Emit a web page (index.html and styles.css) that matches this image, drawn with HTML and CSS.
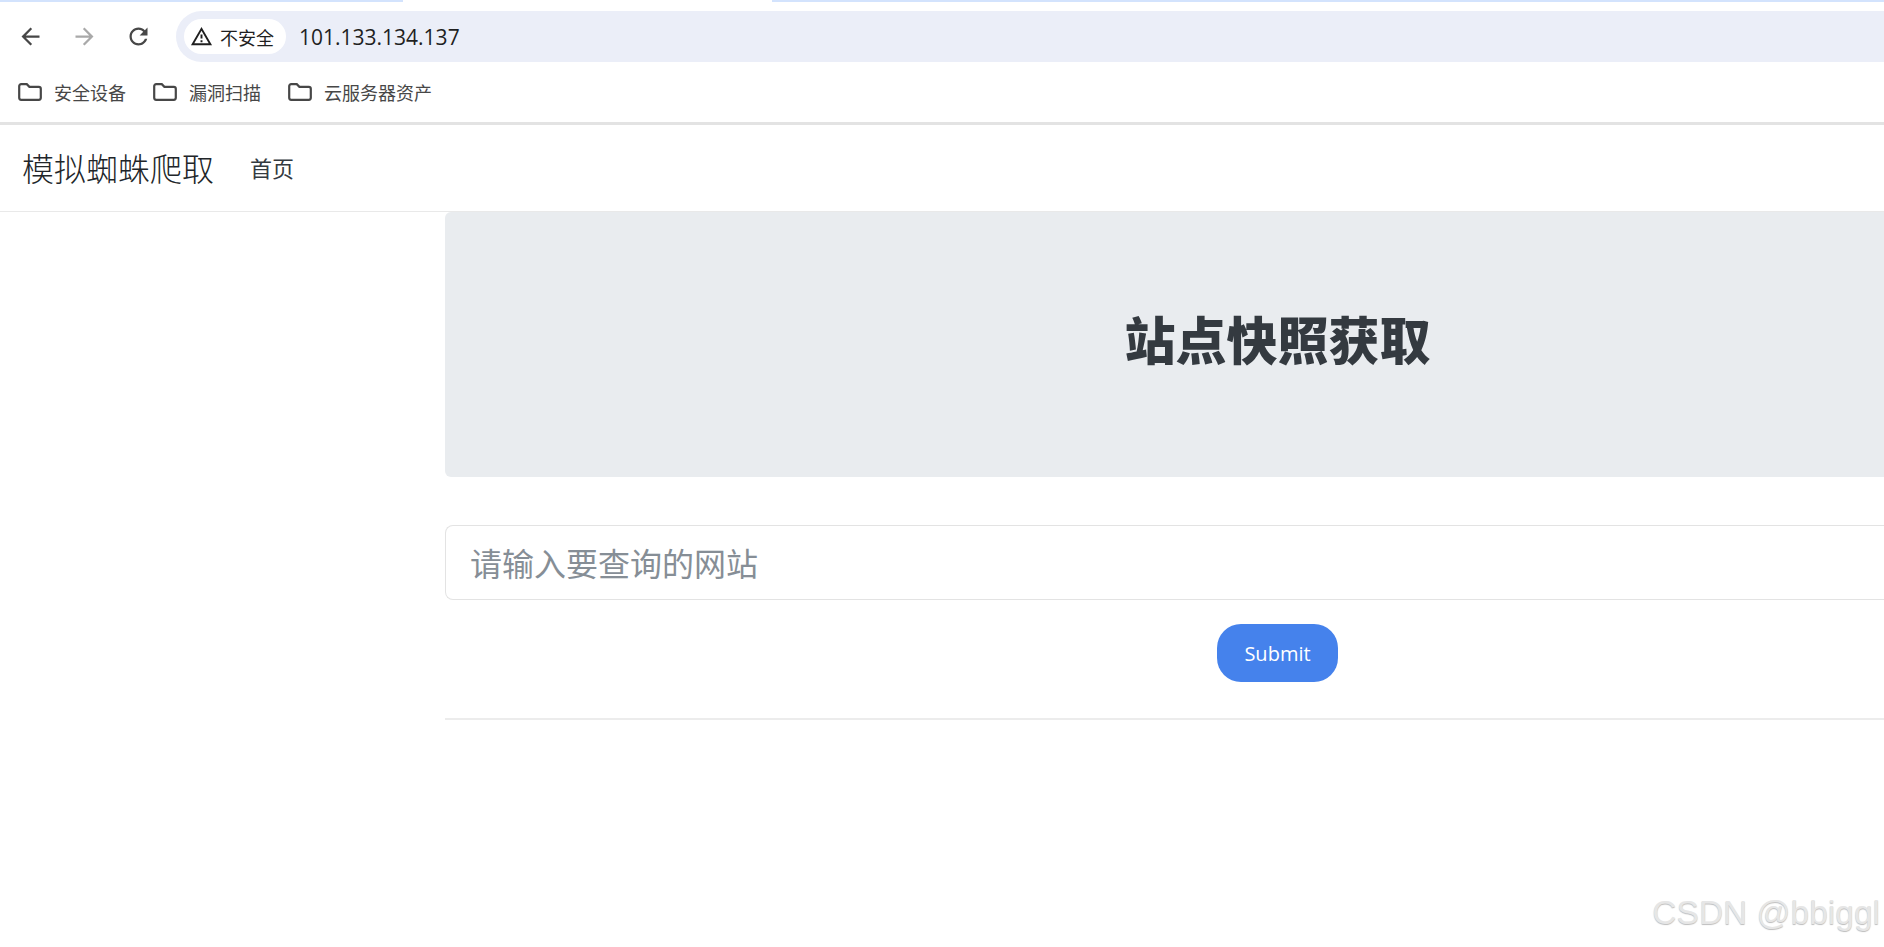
FILE: index.html
```html
<!DOCTYPE html>
<html>
<head>
<meta name="viewport" content="width=device-width, initial-scale=1">
<link rel="stylesheet" href="styles.css">
</head>
<body>

<div class="tabstrip">
  <span class="tab-edge tab-left"></span>
  <span class="tab-edge tab-right"></span>
</div>

<div class="toolbar">
  <svg class="nav-icon" viewBox="0 0 24 24"><path d="M20 11H7.83l5.59-5.59L12 4l-8 8 8 8 1.41-1.41L7.83 13H20v-2z"/></svg>
  <svg class="nav-icon nav-off" viewBox="0 0 24 24"><path d="M12 4l-1.41 1.41L16.17 11H4v2h12.17l-5.58 5.59L12 20l8-8z"/></svg>
  <svg class="nav-icon" viewBox="0 0 24 24"><path d="M17.65 6.35C16.2 4.9 14.21 4 12 4c-4.42 0-7.99 3.58-7.99 8s3.57 8 7.99 8c3.73 0 6.84-2.55 7.73-6h-2.08c-.82 2.33-3.04 4-5.65 4-3.31 0-6-2.69-6-6s2.69-6 6-6c1.66 0 3.14.69 4.22 1.78L13 11h7V4l-2.35 2.35z"/></svg>
  <div class="omnibox">
    <div class="chip">
      <svg class="warn" viewBox="0 0 24 24"><path d="M12 5.99 19.53 19H4.47L12 5.99M12 2 1 21h22L12 2zm1 14h-2v2h2v-2zm0-6h-2v4h2v-4z"/></svg>
      <span>不安全</span>
    </div>
    <span class="url">101.133.134.137</span>
  </div>
</div>

<div class="bookmarks">
  <div class="bookmark">
    <svg class="folder" viewBox="0 0 24 18"><path d="M1.2 3.2a2 2 0 0 1 2-2h5.6l2.6 2.6h9.4a2 2 0 0 1 2 2v9a2 2 0 0 1-2 2H3.2a2 2 0 0 1-2-2z"/></svg>
    <span>安全设备</span>
  </div>
  <div class="bookmark">
    <svg class="folder" viewBox="0 0 24 18"><path d="M1.2 3.2a2 2 0 0 1 2-2h5.6l2.6 2.6h9.4a2 2 0 0 1 2 2v9a2 2 0 0 1-2 2H3.2a2 2 0 0 1-2-2z"/></svg>
    <span>漏洞扫描</span>
  </div>
  <div class="bookmark">
    <svg class="folder" viewBox="0 0 24 18"><path d="M1.2 3.2a2 2 0 0 1 2-2h5.6l2.6 2.6h9.4a2 2 0 0 1 2 2v9a2 2 0 0 1-2 2H3.2a2 2 0 0 1-2-2z"/></svg>
    <span>云服务器资产</span>
  </div>
</div>

<nav class="navbar">
  <a class="brand">模拟蜘蛛爬取</a>
  <a class="nav-link">首页</a>
</nav>

<div class="container">
  <div class="jumbotron">
    <h1>站点快照获取</h1>
  </div>
  <form class="search-form">
    <input class="search-input" type="text" placeholder="请输入要查询的网站">
    <button class="btn-submit" type="button">Submit</button>
  </form>
  <hr class="divider">
</div>

<div class="watermark">CSDN @bbiggl</div>

</body>
</html>
```

FILE: styles.css
```css
* {
  box-sizing: border-box;
}

html, body {
  margin: 0;
  height: 947px;
  overflow: hidden;
  background: #fff;
}

body {
  position: relative;
  font-family: "Open Sans", "Noto Sans CJK SC", sans-serif;
}

/* browser chrome */
.tabstrip {
  height: 2px;
  display: flex;
  justify-content: space-between;
}

.tab-edge {
  height: 2px;
  background: #d3e3fd;
}

.tab-left {
  width: 403px;
}

.tab-right {
  width: 1112px;
}

.toolbar {
  height: 60px;
  padding: 9px 0 0 17px;
  display: flex;
  align-items: center;
  gap: 27px;
}

.nav-icon {
  width: 27px;
  height: 27px;
  fill: #474747;
  flex-shrink: 0;
}

.nav-off {
  fill: #a9a9a9;
}

.omnibox {
  flex: 1;
  height: 51px;
  margin-left: -3px;
  padding-left: 8px;
  display: flex;
  align-items: center;
  background: #ebeef8;
  border-radius: 26px 0 0 26px;
}

.chip {
  width: 102px;
  height: 35px;
  padding-left: 6px;
  display: flex;
  align-items: center;
  gap: 7px;
  background: #fff;
  border-radius: 18px;
  font-size: 18px;
  color: #1f1f1f;
}

.warn {
  width: 23px;
  height: 23px;
  fill: #1f1f1f;
}

.url {
  margin-left: 13px;
  font-size: 21px;
  color: #1f1f1f;
}

.bookmarks {
  height: 63px;
  padding-left: 18px;
  display: flex;
  align-items: center;
  gap: 27px;
  border-bottom: 3px solid #e3e3e3;
}

.bookmark {
  display: flex;
  align-items: center;
  gap: 12px;
  font-size: 18px;
  color: #474747;
}

.folder {
  width: 24px;
  height: 18px;
  fill: none;
  stroke: #474747;
  stroke-width: 2.2;
}

/* page */
.navbar {
  height: 87px;
  padding: 0 0 2px 22px;
  display: flex;
  align-items: center;
  border-bottom: 1px solid #e9e9e9;
}

.brand {
  font-size: 32px;
  font-weight: 300;
  color: #212529;
}

.nav-link {
  margin-left: 36px;
  font-size: 22px;
  color: #343a40;
}

.container {
  margin-left: 445px;
}

.jumbotron {
  height: 265px;
  padding: 92px 0 0 226px;
  background: #e9ecef;
  border-radius: 6px 0 0 6px;
  text-align: center;
}

.jumbotron h1 {
  margin: 0;
  font-size: 51px;
  line-height: 72px;
  font-weight: 900;
  color: #343a40;
}

.search-form {
  margin-top: 48px;
  display: flex;
  flex-direction: column;
  align-items: center;
}

.search-input {
  width: 100%;
  height: 75px;
  padding: 2px 24px 0;
  border: 1px solid #e3e3e3;
  border-right: 0;
  border-radius: 8px 0 0 8px;
  font-family: inherit;
  font-size: 32px;
  color: #343a40;
  outline: none;
}

.search-input::placeholder {
  color: #868e96;
  opacity: 1;
}

.btn-submit {
  width: 121px;
  height: 58px;
  margin: 24px 0 0 226px;
  border: 0;
  border-radius: 24px;
  background: #4582ec;
  color: #fff;
  font-family: inherit;
  font-size: 20px;
}

.divider {
  margin: 36px 0 0;
  border: 0;
  border-top: 2px solid #ececec;
}

.watermark {
  position: absolute;
  right: 4px;
  top: 894px;
  font-family: "Liberation Sans", sans-serif;
  font-size: 33.5px;
  color: #e6e6e6;
  text-shadow: 0 1px 1px #bdbdbd;
  white-space: nowrap;
}
```
